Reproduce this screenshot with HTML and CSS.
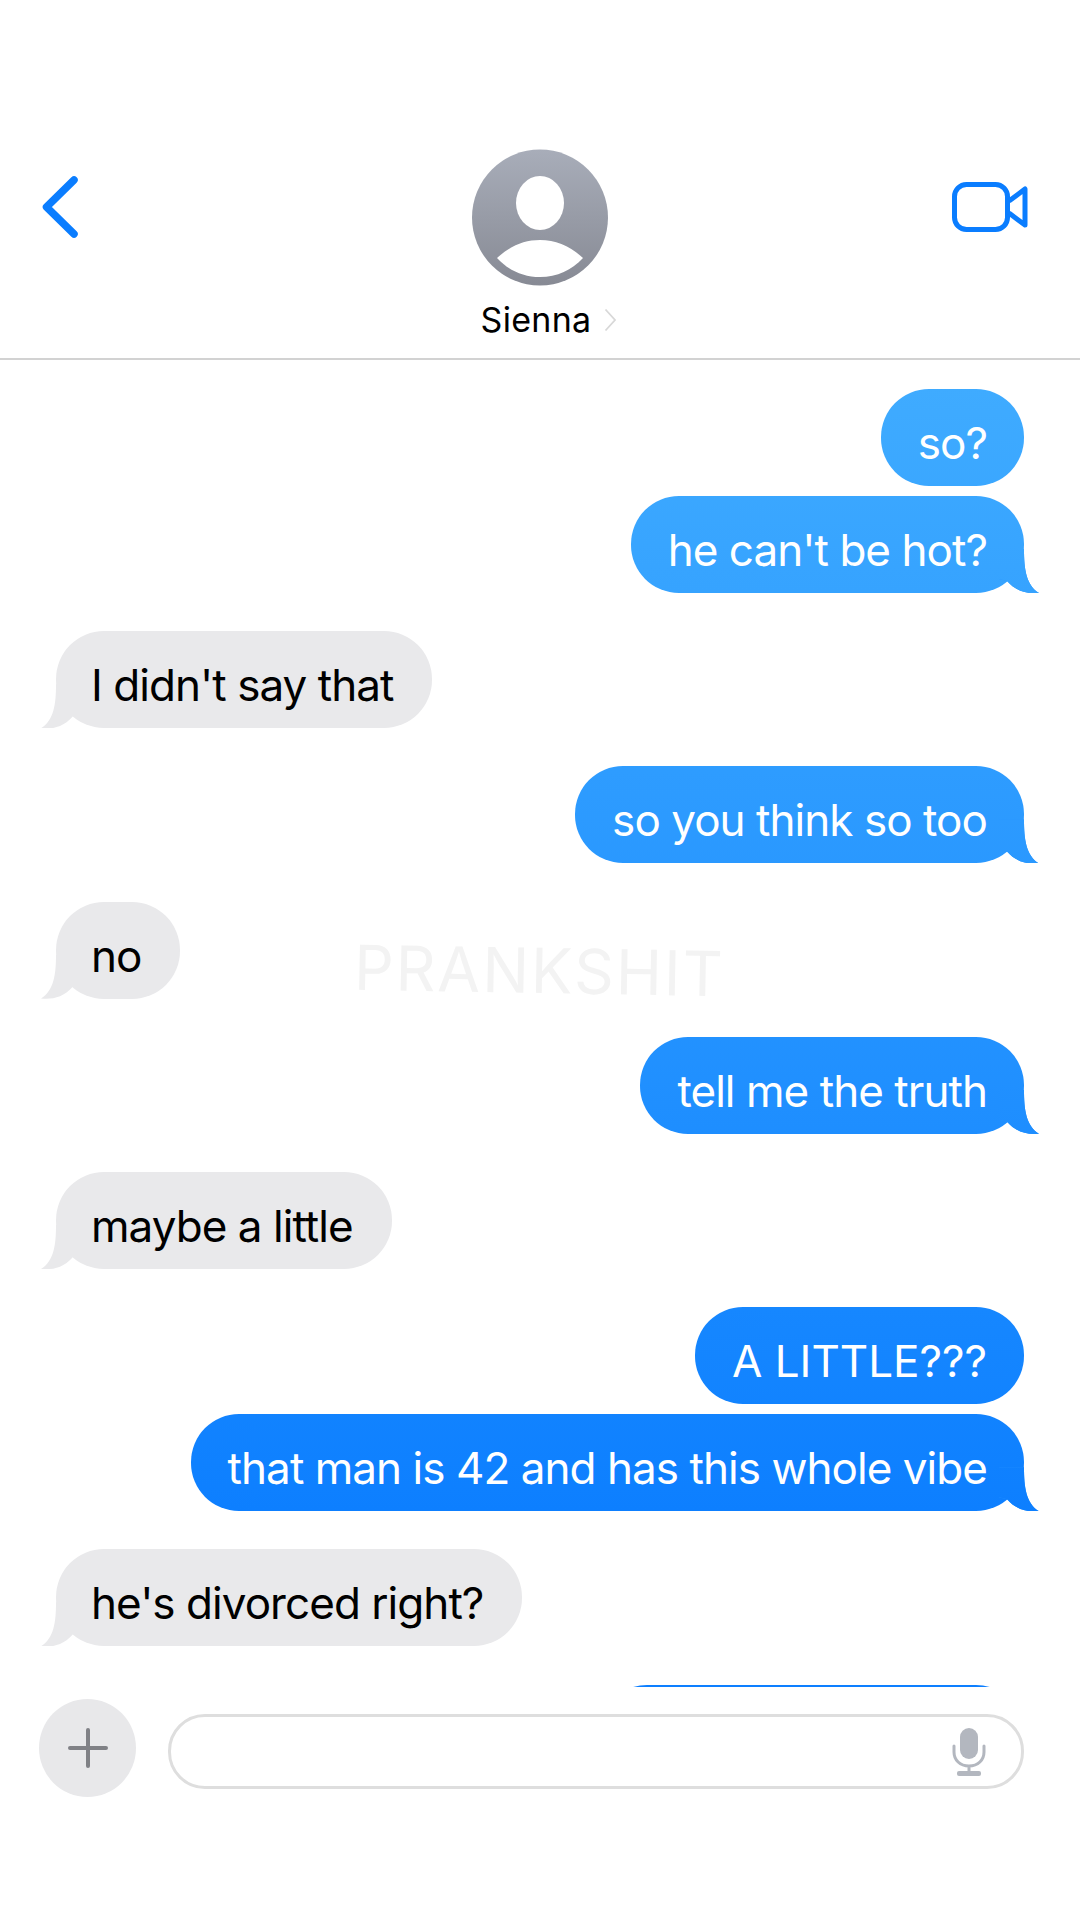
FILE: index.html
```html
<!DOCTYPE html>
<html lang="en">
<head>
<meta charset="utf-8">
<title>Sienna</title>
<link rel="stylesheet" href="styles.css">
</head>
<body>
<main class="phone">
  <header class="header">
    <svg class="back" width="40" height="68" viewBox="0 0 40 68" aria-hidden="true"><path d="M32 6 L4.500 33 L32 60" fill="none" stroke="#0a7dff" stroke-width="7.500" stroke-linecap="round" stroke-linejoin="round"/></svg>
    <div class="contact">
      <svg class="avatar" width="136" height="137" viewBox="0 0 136 137" aria-hidden="true">
        <defs><linearGradient id="av" x1="0" y1="0" x2="0" y2="1"><stop offset="0" stop-color="#a8adb9"/><stop offset="1" stop-color="#878a94"/></linearGradient></defs>
        <circle cx="68" cy="68.500" r="68" fill="url(#av)"/>
        <ellipse cx="68" cy="54" rx="24" ry="27" fill="#fff"/>
        <path d="M25 109 C38 97 52 91 68 91 C84 91 98 97 111 109 C100 121 85 128 68 128 C51 128 36 121 25 109 Z" fill="#fff"/>
      </svg>
      <div class="name-row">
        <span class="name">Sienna</span>
        <svg class="name-chevron" width="13" height="24" viewBox="0 0 13 24" aria-hidden="true"><path d="M1.500 1.500 L11 12 L1.500 22.500" fill="none" stroke="#d8d8d8" stroke-width="1.800"/></svg>
      </div>
    </div>
    <svg class="video" width="80" height="54" viewBox="0 0 80 54" aria-hidden="true"><rect x="4.500" y="4.500" width="53" height="45" rx="12" fill="none" stroke="#0a7dff" stroke-width="5"/><path d="M59 21 L75 9 V45 L59 33" fill="none" stroke="#0a7dff" stroke-width="5" stroke-linejoin="round"/></svg>
  </header>

  <section class="thread">
    <div class="msg sent">so?</div>
    <div class="msg sent tail follow">he can't be hot?</div>
    <div class="msg recv tail">I didn't say that</div>
    <div class="msg sent tail">so you think so too</div>
    <div class="msg recv tail">no</div>
    <div class="msg sent tail">tell me the truth</div>
    <div class="msg recv tail">maybe a little</div>
    <div class="msg sent caps">A LITTLE???</div>
    <div class="msg sent tail follow">that man is 42 and has this whole vibe</div>
    <div class="msg recv tail">he's divorced right?</div>
    <div class="msg sent clipped"></div>
  </section>

  <footer class="composer">
    <div class="plus-button">
      <svg width="40" height="40" viewBox="0 0 40 40" aria-hidden="true"><path d="M20 2 V38 M2 20 H38" stroke="#808186" stroke-width="4" stroke-linecap="round"/></svg>
    </div>
    <div class="input">
      <svg class="mic" width="34" height="48" viewBox="0 0 34 48" aria-hidden="true"><rect x="8" y="0" width="18" height="31" rx="9" fill="#b3b7bf"/><path d="M2 18 V24 C2 32 8 38 17 38 C26 38 32 32 32 24 V18 M17 38 V45" fill="none" stroke="#b3b7bf" stroke-width="3" stroke-linecap="round"/><rect x="5" y="43" width="24" height="5" rx="2" fill="#b3b7bf"/></svg>
    </div>
  </footer>

  <div class="watermark">PRANKSHIT</div>
</main>
</body>
</html>
```

FILE: styles.css
```css
* { box-sizing: border-box; }

html, body {
  margin: 0;
  padding: 0;
  background: #fff;
}

.phone {
  position: relative;
  width: 1080px;
  height: 1920px;
  overflow: hidden;
  display: flex;
  flex-direction: column;
  font-family: Inter, "Liberation Sans", sans-serif;
}

/* Header */
.header {
  flex: none;
  height: 360px;
  padding: 149px 42px 0;
  border-bottom: 2px solid #d2d2d2;
  display: grid;
  grid-template-columns: 1fr auto 1fr;
  align-items: start;
}

.back {
  margin-top: 25px;
}

.video {
  margin-top: 31px;
  margin-right: 8px;
  justify-self: end;
}

.contact {
  display: flex;
  flex-direction: column;
  align-items: center;
  gap: 14px;
}

.avatar {
  display: block;
}

.name-row {
  display: flex;
  align-items: center;
  gap: 13px;
  padding-left: 18px;
}

.name {
  font-size: 34px;
  letter-spacing: 0.3px;
  line-height: 40px;
  color: #000;
}

/* Thread */
.thread {
  flex: none;
  height: 1327px;
  padding: 29px 56px 0;
  overflow: hidden;
  display: flex;
  flex-direction: column;
  align-items: flex-start;
}

.msg {
  position: relative;
  flex: none;
  height: 97px;
  margin-top: 38.200px;
  padding: 6px 37px 0;
  border-radius: 48px;
  font-size: 44px;
  letter-spacing: -0.95px;
  line-height: 97px;
  white-space: nowrap;
}

.msg:first-child {
  margin-top: 0;
}

.msg.follow {
  margin-top: 10px;
}

.msg.caps {
  letter-spacing: 0;
}

.sent,
.sent.tail::after {
  background-color: #2a95ff;
  background-image: linear-gradient(to bottom, #3fabff 388px, #0d7fff 1511px);
  background-attachment: fixed;
}

.sent {
  align-self: flex-end;
  color: #fff;
}

.recv,
.recv.tail::after {
  background: #e9e9eb;
}

.recv {
  padding-left: 35px;
  padding-right: 39px;
  color: #000;
}

.tail::after {
  content: "";
  position: absolute;
  bottom: 0;
  width: 40px;
  height: 44px;
}

.sent.tail::after {
  right: -15px;
  clip-path: path("M25 0 C25 20 27 36 40 44 C28 45 18 43 8 32 L0 30 L0 0 Z");
}

.recv.tail::after {
  left: -15px;
  clip-path: path("M15 0 C15 20 13 36 0 44 C12 45 22 43 32 32 L40 30 L40 0 Z");
}

.clipped {
  width: 425px;
}

/* Composer */
.composer {
  flex: none;
  padding: 12px 56px 0 39px;
  display: flex;
  align-items: flex-start;
  gap: 32px;
}

.plus-button {
  flex: none;
  width: 97px;
  height: 98px;
  border-radius: 50%;
  background: #e8e8ea;
  display: flex;
  align-items: center;
  justify-content: center;
}

.input {
  flex: 1;
  height: 75px;
  margin-top: 15px;
  padding-right: 35px;
  border: 3px solid #dedede;
  border-radius: 37px;
  display: flex;
  align-items: center;
  justify-content: flex-end;
}

/* Watermark over the thread */
.watermark {
  position: absolute;
  left: 354px;
  top: 933px;
  font-size: 62px;
  line-height: 75px;
  font-weight: 400;
  letter-spacing: 2px;
  color: #f3f3f3;
  transform: rotate(1deg);
  pointer-events: none;
}
```
